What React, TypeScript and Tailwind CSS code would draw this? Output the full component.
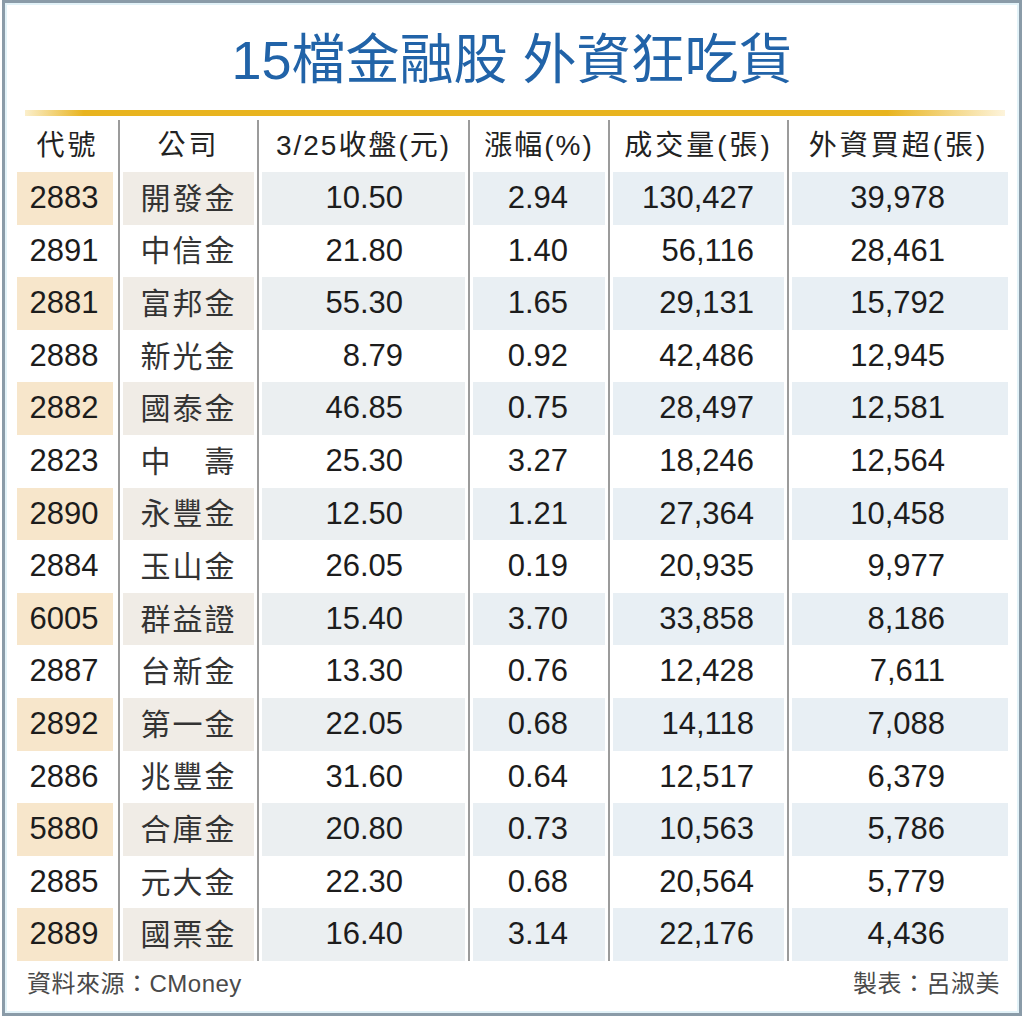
import React from "react";

const rows: [string, string, string, string, string, string][] = [
  ["2883", "開發金", "10.50", "2.94", "130,427", "39,978"],
  ["2891", "中信金", "21.80", "1.40", "56,116", "28,461"],
  ["2881", "富邦金", "55.30", "1.65", "29,131", "15,792"],
  ["2888", "新光金", "8.79", "0.92", "42,486", "12,945"],
  ["2882", "國泰金", "46.85", "0.75", "28,497", "12,581"],
  ["2823", "中　壽", "25.30", "3.27", "18,246", "12,564"],
  ["2890", "永豐金", "12.50", "1.21", "27,364", "10,458"],
  ["2884", "玉山金", "26.05", "0.19", "20,935", "9,977"],
  ["6005", "群益證", "15.40", "3.70", "33,858", "8,186"],
  ["2887", "台新金", "13.30", "0.76", "12,428", "7,611"],
  ["2892", "第一金", "22.05", "0.68", "14,118", "7,088"],
  ["2886", "兆豐金", "31.60", "0.64", "12,517", "6,379"],
  ["5880", "合庫金", "20.80", "0.73", "10,563", "5,786"],
  ["2885", "元大金", "22.30", "0.68", "20,564", "5,779"],
  ["2889", "國票金", "16.40", "3.14", "22,176", "4,436"],
];

const font = { fontFamily: '"Liberation Sans", "Noto Sans CJK TC", sans-serif' };

export default function App() {
  return (
    <div className="w-[1024px] h-[1020px] bg-white" style={font}>
      <div className="ml-[2px] w-[1020px] h-[1016px] border-[3px] border-[#8a9ba8] shadow-[inset_0_0_0_2px_#e2f2f8] flex flex-col">
        <div className="pt-[25px] h-[89px] text-center text-[54px] leading-[64px] text-[#2163a8] font-normal">
          15檔金融股 外資狂吃貨
        </div>
        <div className="ml-[20px] mt-[18px] w-[980px] h-[6px] bg-[linear-gradient(to_right,#fbefcc,#e8b41f_6%,#e8b41f_88%,#fdf4dc)]" />
        <div className="ml-[12px] w-[991px] mt-[4px]">
          <div className="grid grid-cols-[101px_139px_211px_140px_179px_221px] h-[52px] items-center text-[28px] tracking-[3px] text-[#222] text-center">
            <div>代號</div>
            <div className="h-full flex items-center justify-center border-l-2 border-[#9b9b9b]">公司</div>
            <div className="h-full flex items-center justify-center border-l-2 border-[#9b9b9b] tracking-[2px]">3/25收盤(元)</div>
            <div className="h-full flex items-center justify-center border-l-2 border-[#9b9b9b] tracking-[2px]">漲幅(%)</div>
            <div className="h-full flex items-center justify-center border-l-2 border-[#9b9b9b]">成交量(張)</div>
            <div className="h-full flex items-center justify-center border-l-2 border-[#9b9b9b]">外資買超(張)</div>
          </div>
          {rows.map((r, i) => {
            const shade = i % 2 === 0;
            return (
              <div key={i} className="grid grid-cols-[101px_139px_211px_140px_179px_221px] h-[52.6px] text-[31px] text-[#1c1c1c]">
                <div className="h-full pr-[5px]">
                  <div className={`h-full flex items-center justify-center pr-[2px] ${shade ? "bg-[#f7e6cb]" : ""}`}>{r[0]}</div>
                </div>
                <div className="h-full border-l-2 border-[#9b9b9b] px-[3px]">
                  <div className={`h-full flex items-center justify-center text-[30px] tracking-[2px] text-[#333] ${shade ? "bg-[#f0ece6]" : ""}`}>{r[1]}</div>
                </div>
                <div className="h-full border-l-2 border-[#9b9b9b] px-[3px]">
                  <div className={`h-full flex items-center justify-end pr-[62px] ${shade ? "bg-[#ebeff1]" : ""}`}>{r[2]}</div>
                </div>
                <div className="h-full border-l-2 border-[#9b9b9b] px-[3px]">
                  <div className={`h-full flex items-center justify-end pr-[37px] ${shade ? "bg-[#e9eff3]" : ""}`}>{r[3]}</div>
                </div>
                <div className="h-full border-l-2 border-[#9b9b9b] px-[3px]">
                  <div className={`h-full flex items-center justify-end pr-[30px] ${shade ? "bg-[#e8eff4]" : ""}`}>{r[4]}</div>
                </div>
                <div className="h-full border-l-2 border-[#9b9b9b] pl-[3px]">
                  <div className={`h-full flex items-center justify-end pr-[63px] ${shade ? "bg-[#e8eff4]" : ""}`}>{r[5]}</div>
                </div>
              </div>
            );
          })}
        </div>
        <div className="flex justify-between items-center h-[46px] pl-[22px] pr-[19px] text-[24px] text-[#4a4a4a] tracking-[0.5px]">
          <span>資料來源：CMoney</span>
          <span>製表：呂淑美</span>
        </div>
      </div>
    </div>
  );
}
